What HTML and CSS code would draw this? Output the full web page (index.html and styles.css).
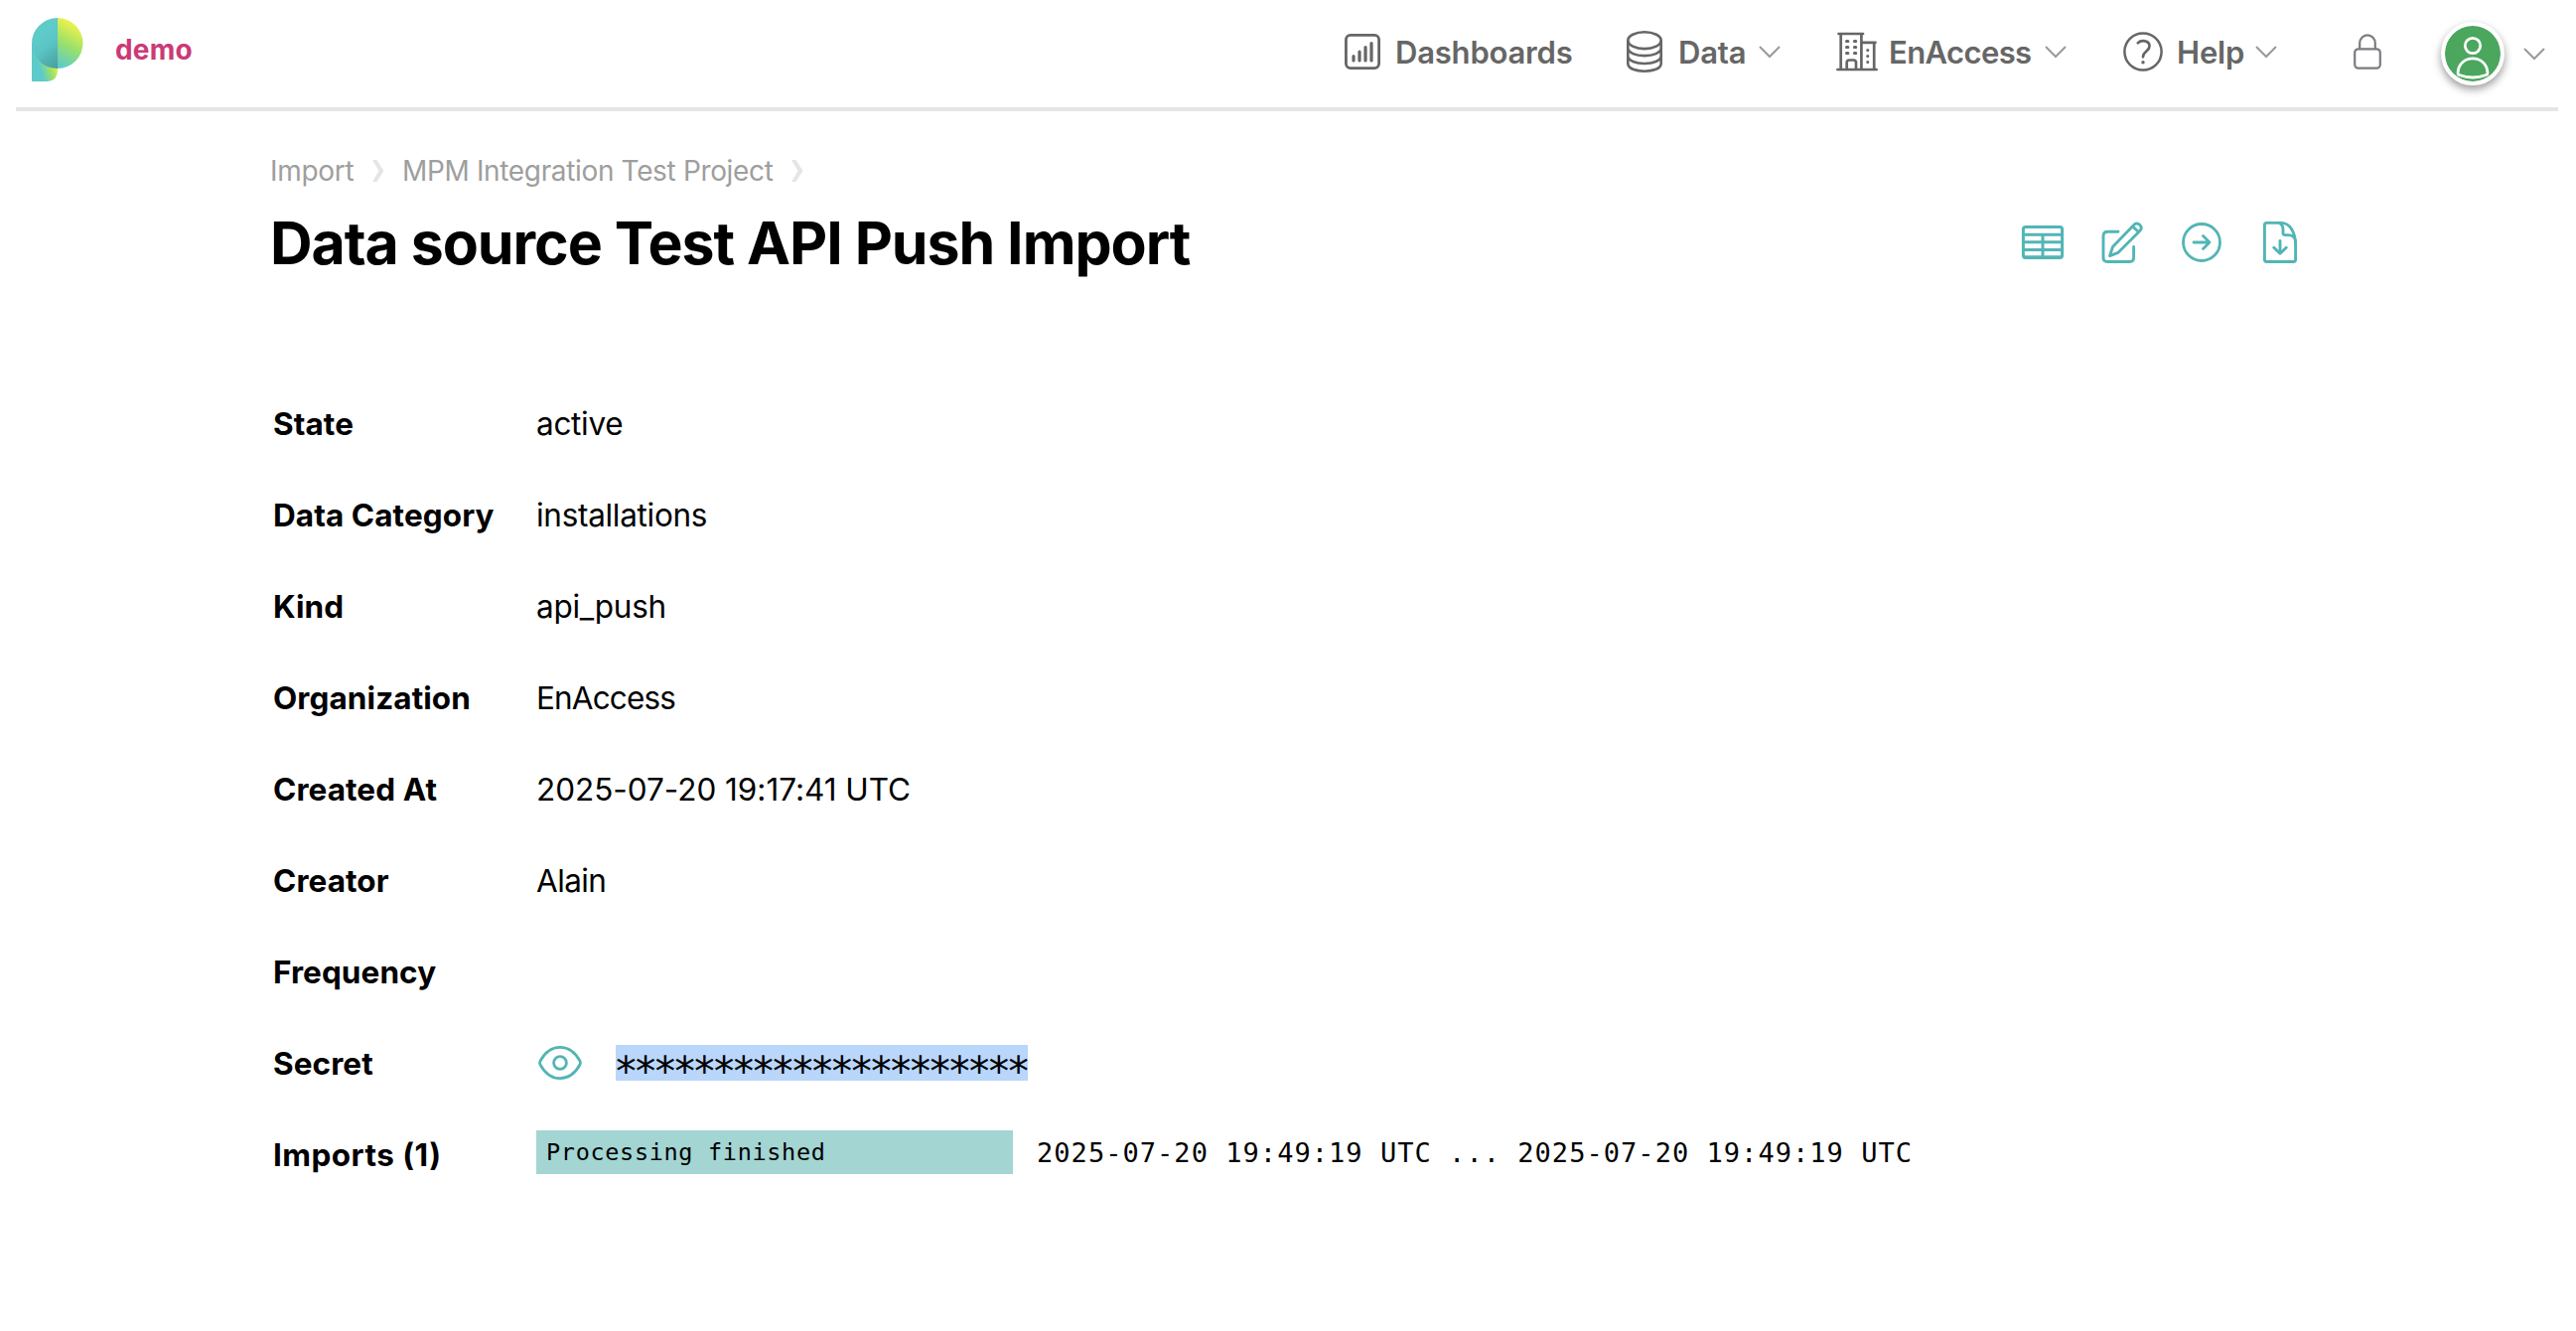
FILE: index.html
```html
<!DOCTYPE html>
<html lang="en">
<head>
<meta charset="utf-8">
<title>Data source Test API Push Import</title>
<link rel="stylesheet" href="styles.css">
</head>
<body>
<header class="topbar">
  <a class="brand">
    <svg class="logo" width="52" height="64" viewBox="0 0 52 64">
      <defs>
        <linearGradient id="right" x1="46" y1="8" x2="24" y2="46" gradientUnits="userSpaceOnUse"><stop offset="0" stop-color="#eef24b"/><stop offset=".5" stop-color="#99e06c"/><stop offset="1" stop-color="#5ccbca"/></linearGradient>
        <linearGradient id="left" x1="10" y1="18" x2="32" y2="46" gradientUnits="userSpaceOnUse"><stop offset="0" stop-color="#5ecbc9"/><stop offset=".35" stop-color="#5ac4c3"/><stop offset="1" stop-color="#479c9e"/></linearGradient>
        <linearGradient id="stem" x1="10" y1="56" x2="28" y2="50" gradientUnits="userSpaceOnUse"><stop offset="0" stop-color="#5ccbca"/><stop offset=".5" stop-color="#9ce06a"/><stop offset="1" stop-color="#f4f03c"/></linearGradient>
      </defs>
      <path d="M0 26V64H16Q26 63 26 53V26Z" fill="url(#stem)"/>
      <path d="M26 0A26 25.5 0 0 0 0 26Q1 35 5 40Q12 51 26 51Z" fill="url(#left)"/>
      <path d="M26 0A25.5 25.5 0 0 1 26 51Z" fill="url(#right)"/>
    </svg>
    <span class="brand-name">demo</span>
  </a>
  <nav class="nav">
    <a class="nav-item dashboards">
      <svg width="36" height="36" viewBox="0 0 36 36" fill="none" stroke="currentColor"><rect x="1.4" y="1.4" width="33.2" height="33.2" rx="4.5" stroke-width="2.8"/><path d="M9 22.5V27M15 18V27M21 13.5V27M27 9.5V27" stroke-width="3.2" stroke-linecap="round"/></svg>
      <span class="label">Dashboards</span>
    </a>
    <a class="nav-item data">
      <svg width="36" height="42" viewBox="0 0 36 42" fill="none" stroke="currentColor" stroke-width="2.6"><ellipse cx="18" cy="9.7" rx="16.7" ry="8.4"/><path d="M1.3 9.7V33C1.3 43.3 34.7 43.3 34.7 33V9.7M1.3 17C1.3 27.8 34.7 27.8 34.7 17M1.3 25C1.3 35.6 34.7 35.6 34.7 25"/></svg>
      <span class="label">Data</span>
      <svg class="chevron" width="22" height="12" viewBox="0 0 22 12"><path d="M1 1l10 10L21 1"/></svg>
    </a>
    <a class="nav-item org">
      <svg width="42" height="40" viewBox="0 0 42 40" fill="none" stroke="currentColor" stroke-width="2.7" stroke-linecap="round"><path d="M1.4 38H40.6M2.5 2H27M4.7 2V38M25.4 2V38M25.4 10.8H39.5M38.2 10.8V38M10.7 38V31Q10.7 28.5 13.2 28.5H17.5Q20 28.5 20 31V38"/><path d="M10.5 9.5h1.4M18.4 9.5h1.4M10.5 15.5h1.4M18.4 15.5h1.4M10.5 21.5h1.4M18.4 21.5h1.4M31.7 18.5h.1M31.7 24.5h.1M31.7 30.5h.1" stroke-width="3"/></svg>
      <span class="label">EnAccess</span>
      <svg class="chevron" width="22" height="12" viewBox="0 0 22 12"><path d="M1 1l10 10L21 1"/></svg>
    </a>
    <a class="nav-item help">
      <svg width="40" height="40" viewBox="0 0 40 40" fill="none" stroke="currentColor" stroke-linecap="round"><circle cx="20" cy="20" r="18.6" stroke-width="2.5"/><path d="M14.8 11.2C18 8.2 26.5 8.2 26.5 14.5C26.5 19.5 20 19.5 20 25.3" stroke-width="2.7"/><path d="M20 30.8h.01" stroke-width="3.4"/></svg>
      <span class="label">Help</span>
      <svg class="chevron" width="22" height="12" viewBox="0 0 22 12"><path d="M1 1l10 10L21 1"/></svg>
    </a>
    <svg class="lock" width="28" height="36" viewBox="0 0 28 36" fill="none" stroke="#7a7a80" stroke-width="2.2"><rect x="1.2" y="15.3" width="25.6" height="19.4" rx="3.6"/><path d="M6.2 15V9.3A7.8 8 0 0 1 21.8 9.3V15"/></svg>
    <div class="avatar">
      <svg width="56" height="56" viewBox="0 0 56 56" fill="none" stroke="#fff" stroke-width="2.8"><circle cx="28" cy="20" r="7.7"/><path d="M13 47.5C14 28 42 28 43 47.5Q43 49 41.5 49.5Q28 54.5 14.5 49.5Q13 49 13 47.5Z"/></svg>
    </div>
    <svg class="chevron user-chevron" width="22" height="12" viewBox="0 0 22 12"><path d="M1 1l10 10L21 1"/></svg>
  </nav>
</header>
<main class="page">
  <div class="breadcrumb">
    <a class="crumb-import">Import</a>
    <svg width="12" height="22" viewBox="0 0 12 22"><path d="M0 0H4.5L11.5 11L4.5 22H0L6.5 11Z" fill="#e5e5e5"/></svg>
    <a class="crumb-project">MPM Integration Test Project</a>
    <svg width="12" height="22" viewBox="0 0 12 22"><path d="M0 0H4.5L11.5 11L4.5 22H0L6.5 11Z" fill="#e5e5e5"/></svg>
  </div>
  <div class="heading">
    <h1>Data source Test API Push Import</h1>
    <div class="actions">
      <svg width="42" height="34" viewBox="0 0 42 34" fill="none" stroke="currentColor" stroke-width="3"><rect x="1.4" y="1.4" width="39.2" height="31" rx="2.5"/><path d="M1.4 9.2H40.6M1.4 16.8H40.6M1.4 24.4H40.6M1.4 31.8H40.6M21 9.2V32"/></svg>
      <svg width="42" height="42" viewBox="0 0 42 42" fill="none" stroke="currentColor" stroke-width="2.9" stroke-linejoin="round" stroke-linecap="round"><path d="M17 10.2H6.5Q2 10.2 2 14.7V36.5Q2 40.5 6.5 40.5H28.5Q32.6 40.5 32.6 36.5V25.5M8.5 34.6L11.5 25.5L32.5 3.8Q35.5 .6 38.8 3.4Q41.7 6.6 38.5 9.7L17 31.3ZM31.5 5L37.7 10.6"/></svg>
      <svg width="40" height="40" viewBox="0 0 40 40" fill="none" stroke="currentColor" stroke-width="2.8" stroke-linecap="round" stroke-linejoin="round"><circle cx="20" cy="20" r="18.5"/><path d="M12 20H28M21.5 13.5L28 20L21.5 26.5"/></svg>
      <svg class="download" width="34" height="42" viewBox="0 0 34 42" fill="none" stroke="currentColor" stroke-width="2.9" stroke-linecap="round" stroke-linejoin="round"><path d="M18 1.4H3.5Q1.4 1.4 1.4 3.5V38.3Q1.4 40.5 3.5 40.5H30.5Q32.6 40.5 32.6 38.3V21M18 1.4C26.5 1.4 32.6 10 32.6 24M16 1.4Q20 3 20 8V11.5Q20 13.6 22.2 13.6H25Q31 13.6 32.6 19M17 19.5V32.3M10.8 26.3L17 32.3L23.2 26.3"/></svg>
    </div>
  </div>
  <dl class="details">
    <div class="row"><dt>State</dt><dd>active</dd></div>
    <div class="row"><dt>Data Category</dt><dd>installations</dd></div>
    <div class="row"><dt>Kind</dt><dd>api_push</dd></div>
    <div class="row"><dt>Organization</dt><dd class="organization">EnAccess</dd></div>
    <div class="row"><dt>Created At</dt><dd class="date">2025-07-20 19:17:41 UTC</dd></div>
    <div class="row"><dt>Creator</dt><dd class="creator">Alain</dd></div>
    <div class="row"><dt>Frequency</dt><dd></dd></div>
    <div class="row"><dt>Secret</dt><dd class="secret">
      <svg width="44" height="34" viewBox="0 0 44 34" fill="none" stroke="currentColor" stroke-width="2.8"><path d="M2 18.8Q1 17 2 15.2C12-3.2 32-3.2 42 15.2Q43 17 42 18.8C32 37.2 12 37.2 2 18.8Z"/><circle cx="22" cy="17" r="6.4"/></svg>
      <span class="mask">*********************</span></dd></div>
    <div class="row"><dt class="imports-label">Imports (1)</dt><dd class="import"><span class="badge">Processing finished</span><span class="period">2025-07-20 19:49:19 UTC ... 2025-07-20 19:49:19 UTC</span></dd></div>
  </dl>
</main>
</body>
</html>
```
FILE: styles.css
```css
* { box-sizing: border-box; }
body { margin: 0; background: #fff; color: #000; font-family: Inter, "Liberation Sans", sans-serif; white-space: nowrap; }
svg { display: block; flex: none; overflow: visible; }

.topbar { height: 112px; margin: 0 18px 0 16px; border-bottom: 4px solid #e5e5e5; display: flex; justify-content: space-between; }
.brand { display: flex; padding-left: 16px; padding-top: 18px; gap: 32px; }
.brand-name { font-size: 28px; font-weight: 700; line-height: 64px; color: #cb3a77; letter-spacing: 0.2px; }
.nav { display: flex; align-items: center; height: 104px; padding-right: 13px; color: #666; }
.nav-item { display: flex; align-items: center; font-size: 31px; font-weight: 600; line-height: 40px; letter-spacing: -0.2px; }
.label { padding-top: 1px; }
.dashboards .label { width: 233px; margin-left: 15px; }
.data .label { width: 81px; margin-left: 16px; }
.org .label { width: 157px; margin-left: 11px; letter-spacing: -0.6px; }
.help .label { width: 79px; margin-left: 14px; }
.org { margin-left: 56px; }
.help { margin-left: 57px; }
.chevron { fill: none; stroke: #9a9a9a; stroke-width: 2; }
.lock { margin-left: 77px; }
.avatar { width: 64px; height: 64px; margin: 4px 19px 0 60px; border: 4px solid #fff; border-radius: 50%; background: #4ba75e; background-clip: padding-box; box-shadow: 0 4px 8px rgba(0, 0, 0, .4), inset 0 0 0 1px #4ba75e; }
.user-chevron { margin-top: 4px; }

.page { padding: 40px 281px 0 272px; }
.breadcrumb { display: flex; align-items: center; height: 40px; font-size: 28px; color: #9e9e9e; }
.crumb-import { width: 103px; letter-spacing: -0.3px; }
.crumb-project { width: 392px; margin-left: 18px; letter-spacing: -0.35px; }
.heading { display: flex; align-items: center; justify-content: space-between; height: 104px; }
h1 { margin: 0; padding-top: 2px; font-size: 59px; font-weight: 700; line-height: 80px; letter-spacing: -1.05px; }
.actions { display: flex; align-items: center; gap: 38.5px; color: #52b5b5; }
.download { margin-left: 4px; }
.details { margin: 84px 0 0 3px; font-size: 31.5px; }
.row { display: flex; align-items: center; height: 92px; }
dt { width: 265px; font-weight: 700; letter-spacing: 0.08px; }
.imports-label { letter-spacing: 0.45px; }
dd { margin: 0; letter-spacing: -0.3px; }
.organization { letter-spacing: -0.85px; }
.creator { letter-spacing: -0.6px; }
.date { letter-spacing: -0.03px; }
.secret { display: flex; align-items: center; color: #52b5b5; padding-left: 2px; }
.mask { width: 415px; height: 36px; margin-left: 34px; padding-top: 7px; background: #b9d6fb; color: #000; font-family: "DejaVu Sans Mono", monospace; font-size: 41px; line-height: 40px; letter-spacing: -4.92px; text-indent: -2px; }
.import { display: flex; align-items: center; padding-bottom: 4px; font-family: "DejaVu Sans Mono", monospace; }
.badge { width: 480px; height: 44px; padding-left: 10px; background: #a3d5d3; font-size: 23.5px; line-height: 44px; letter-spacing: 0.67px; }
.period { margin-left: 24px; font-size: 27px; letter-spacing: 1.04px; }
```
